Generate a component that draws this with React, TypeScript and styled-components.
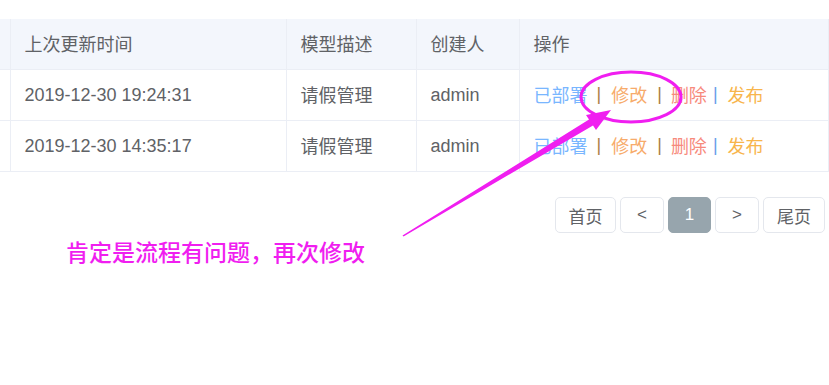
import React from "react";
import styled, { createGlobalStyle } from "styled-components";

const Global = createGlobalStyle`
  html, body { margin: 0; padding: 0; background: #fff; }
  body { font-family: "Liberation Sans", "Noto Sans CJK SC", sans-serif; }
`;

const Page = styled.div`
  position: relative;
  width: 829px;
  height: 385px;
  padding-top: 19px;
  box-sizing: border-box;
  overflow: hidden;
`;

const Table = styled.table`
  width: 829px;
  border-collapse: collapse;
  table-layout: fixed;
`;

const HeadCell = styled.th`
  height: 48px;
  padding: 0 0 2px 14px;
  text-align: left;
  font-weight: normal;
  font-size: 18px;
  line-height: 20px;
  color: #606266;
  font-family: "Noto Sans CJK SC", sans-serif;
  background: #f3f6fc;
  border-right: 1px solid #ebeef5;
  border-bottom: 1px solid #ebeef5;
`;

const Cell = styled.td<{ $cjk?: boolean }>`
  height: ${(p) => (p.$cjk ? 47 : 50)}px;
  padding: 0 0 ${(p) => (p.$cjk ? 3 : 0)}px 14px;
  font-size: 18px;
  line-height: 20px;
  color: #606266;
  font-family: ${(p) =>
    p.$cjk ? `"Noto Sans CJK SC", sans-serif` : `"Liberation Sans", "Noto Sans CJK SC", sans-serif`};
  border-right: 1px solid #ebeef5;
  border-bottom: 1px solid #ebeef5;
  white-space: nowrap;
  vertical-align: middle;
`;

const Ops = styled.div`
  display: flex;
  align-items: center;
  font-family: "Noto Sans CJK SC", sans-serif;
  font-size: 18px;
  line-height: 20px;
`;

const Link = styled.span<{ $color: string }>`
  color: ${(p) => p.$color};
`;

const Sep = styled.span<{ $color: string; $l: number; $r: number }>`
  color: ${(p) => p.$color};
  font-family: "Liberation Sans", sans-serif;
  margin: 0 ${(p) => p.$r}px 0 ${(p) => p.$l}px;
`;

const Pager = styled.div`
  display: flex;
  justify-content: flex-end;
  gap: 4px;
  margin-top: 25px;
  padding-right: 4px;
`;

const PageBtn = styled.div<{ $w: number; $active?: boolean }>`
  width: ${(p) => p.$w}px;
  height: 36px;
  box-sizing: border-box;
  border: 1px solid ${(p) => (p.$active ? "#97a5ad" : "#e4e7ed")};
  border-radius: 5px;
  background: ${(p) => (p.$active ? "#97a5ad" : "#fff")};
  color: ${(p) => (p.$active ? "#fff" : "#606266")};
  display: flex;
  align-items: center;
  justify-content: center;
  font-size: 17px;
  font-family: "Liberation Sans", "Noto Sans CJK SC", sans-serif;
`;

const Note = styled.div`
  position: absolute;
  left: 66px;
  top: 234px;
  font-family: "Noto Sans CJK SC", sans-serif;
  font-size: 23px;
  font-weight: 500;
  color: #f01ef0;
  white-space: nowrap;
`;

const Overlay = styled.svg`
  position: absolute;
  left: 0;
  top: 0;
  pointer-events: none;
`;

const rows = [
  { time: "2019-12-30 19:24:31" },
  { time: "2019-12-30 14:35:17" },
];

export default function App() {
  return (
    <>
      <Global />
      <Page>
        <Table>
          <colgroup>
            <col style={{ width: 10 }} />
            <col style={{ width: 276 }} />
            <col style={{ width: 130 }} />
            <col style={{ width: 103 }} />
            <col />
          </colgroup>
          <thead>
            <tr>
              <HeadCell />
              <HeadCell>上次更新时间</HeadCell>
              <HeadCell>模型描述</HeadCell>
              <HeadCell>创建人</HeadCell>
              <HeadCell>操作</HeadCell>
            </tr>
          </thead>
          <tbody>
            {rows.map((r) => (
              <tr key={r.time}>
                <Cell />
                <Cell>{r.time}</Cell>
                <Cell $cjk>请假管理</Cell>
                <Cell>admin</Cell>
                <Cell $cjk>
                  <Ops>
                    <Link $color="#79b6ff">已部署</Link>
                    <Sep $color="#a97d45" $l={9} $r={10}>|</Sep>
                    <Link $color="#f7ab6b">修改</Link>
                    <Sep $color="#a97d45" $l={10} $r={9}>|</Sep>
                    <Link $color="#f78a7c">删除</Link>
                    <Sep $color="#6a9ee8" $l={6} $r={10}>|</Sep>
                    <Link $color="#f8b54c">发布</Link>
                  </Ops>
                </Cell>
              </tr>
            ))}
          </tbody>
        </Table>
        <Pager>
          <PageBtn $w={61}>首页</PageBtn>
          <PageBtn $w={44}>&lt;</PageBtn>
          <PageBtn $w={43} $active>1</PageBtn>
          <PageBtn $w={44}>&gt;</PageBtn>
          <PageBtn $w={62}>尾页</PageBtn>
        </Pager>
        <Note>肯定是流程有问题，再次修改</Note>
        <Overlay width="829" height="385" viewBox="0 0 829 385">
          <ellipse cx="631" cy="97" rx="50" ry="25" fill="none" stroke="#f01ef0" strokeWidth="3" />
          <polygon
            points="403.5,236.5 593,125.5 596,130 611,110 586,115 589,119.5 402.5,235.5"
            fill="#f01ef0"
          />
        </Overlay>
      </Page>
    </>
  );
}
